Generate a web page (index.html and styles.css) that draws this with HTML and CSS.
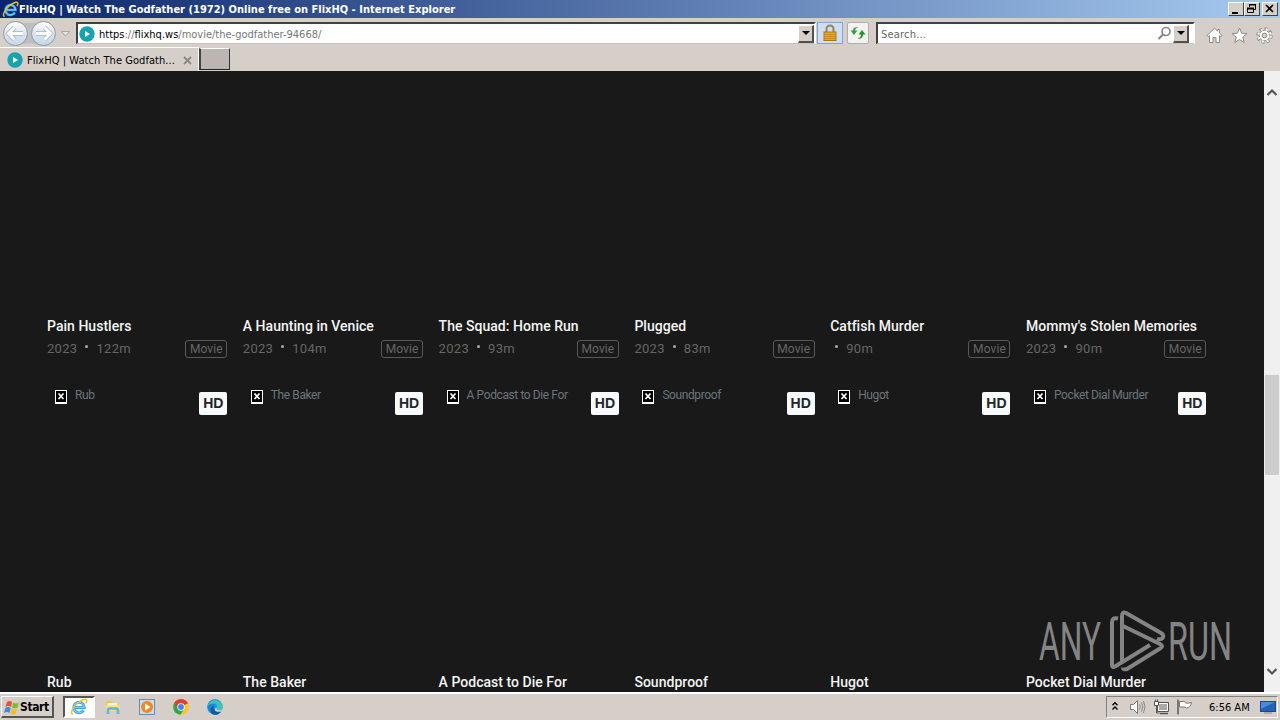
FILE: index.html
```html
<!DOCTYPE html>
<html lang="en">
<head>
    <meta charset="UTF-8">
    <meta name="viewport" content="width=device-width, initial-scale=1.0">
    <title>FlixHQ | Watch The Godfather (1972) Online free on FlixHQ</title>
    <link rel="stylesheet" href="styles.css">
</head>
<body>
    <svg width="0" height="0" class="defs">
        <defs>
            <linearGradient id="nav-fill" x1="0" y1="0" x2="0" y2="1">
                <stop offset="0" stop-color="#fff"/>
                <stop offset="0.5" stop-color="#dde3ea"/>
                <stop offset="1" stop-color="#c3d9ec"/>
            </linearGradient>
            <linearGradient id="edge-fill" x1="0" y1="0" x2="1" y2="1">
                <stop offset="0" stop-color="#1464b4"/>
                <stop offset="0.55" stop-color="#1d9be0"/>
                <stop offset="1" stop-color="#54d07a"/>
            </linearGradient>
            <symbol id="ie" viewBox="0 0 18 18">
                <path d="M13.6 12.2A5.3 5.3 0 1 1 14.3 9.5H5" fill="none" stroke="#3c9fe0" stroke-width="2.8"/>
                <path d="M13.6 12.2A5.3 5.3 0 1 1 14.3 9.5H5" fill="none" stroke="#8fd4f8" stroke-width="1"/>
                <path d="M2.8 16.4C-.5 15.500 3 9 8 5 12 1.500 16.500.2 16.800 2.600c.1 1-.4 2-1 2.900" fill="none" stroke="#f2c21c" stroke-width="1.500"/>
            </symbol>
            <symbol id="play" viewBox="0 0 16 16">
                <circle cx="8" cy="8" r="7.700" fill="#17a2b0"/>
                <path d="M6 5l5 3-5 3z" fill="#fff"/>
            </symbol>
        </defs>
    </svg>

    <div class="titlebar">
        <svg class="title-icon" width="17" height="17"><use href="#ie"/></svg>
        <span class="title-text">FlixHQ | Watch The Godfather (1972) Online free on FlixHQ - Internet Explorer</span>
        <div class="win-buttons">
            <span class="win-btn"><svg width="14" height="12"><path d="M3 9h6v2H3z"/></svg></span>
            <span class="win-btn"><svg width="14" height="12"><path d="M4.500 4V1.500h6v5H9" fill="none" stroke="#000"/><path d="M4 1h7v1.500H4z"/><path d="M2.500 5.500h6v4h-6z" fill="none" stroke="#000"/><path d="M2 4.500h7v2H2z"/></svg></span>
            <span class="win-btn close"><svg width="14" height="12"><path d="M3 2l7 7M10 2L3 9" stroke="#000" stroke-width="1.600"/></svg></span>
        </div>
    </div>

    <div class="toolbar">
        <svg class="nav" width="76" height="28" viewBox="0 0 76 28">
            <path d="M15 2Q29 6 43 2A12.500 12.500 0 0 1 43 27Q29 22 15 27z" fill="#bfbfc2"/>
            <circle cx="15.500" cy="14.500" r="12" fill="url(#nav-fill)" stroke="#8e9aa8"/>
            <circle cx="43.500" cy="14.500" r="12" fill="url(#nav-fill)" stroke="#8e9aa8"/>
            <path d="M23 14.500H9M14.500 8.500l-6 6 6 6" fill="none" stroke="#9fb4c8" stroke-width="4.500"/>
            <path d="M23 14.500H9M14.500 8.500l-6 6 6 6" fill="none" stroke="#fff" stroke-width="3"/>
            <path d="M36 14.500h14M44.500 8.500l6 6-6 6" fill="none" stroke="#9fb4c8" stroke-width="4.500"/>
            <path d="M36 14.500h14M44.500 8.500l6 6-6 6" fill="none" stroke="#fff" stroke-width="3"/>
            <path d="M61.500 12.500h8l-4 4.500z" fill="#e4e1dc" stroke="#aaa6a2"/>
        </svg>
        <div class="field address">
            <svg width="16" height="16"><use href="#play"/></svg>
            <span class="url"><b>https</b>://<b>flixhq.ws</b>/movie/the-godfather-94668/</span>
            <span class="drop"><svg width="8" height="4"><path d="M0 0h8L4 4z"/></svg></span>
        </div>
        <div class="tool lock">
            <svg width="14" height="18" viewBox="0 0 14 18">
                <path d="M3.500 9V5a3.500 3.500 0 0 1 7 0v4" fill="none" stroke="#9a8450" stroke-width="2"/>
                <rect x="1" y="8" width="12" height="8.500" fill="#e8a91e" stroke="#a8741a"/>
                <path d="M1.500 10.500h11M1.500 12.500h11M1.500 14.500h11" stroke="#c4851a" stroke-width=".8"/>
            </svg>
        </div>
        <div class="tool refresh">
            <svg width="16" height="16" viewBox="0 0 16 16">
                <path d="M8.500 2.500Q5 3 5 5.500H7.500L4 10 .5 5.500H3Q3 1.500 8.500 2.500z" fill="#3aa03c"/>
                <path d="M7.500 13.500Q11 13 11 9.500H8.500L12 5l3.500 4.500H13Q13 14.500 7.500 13.500z" fill="#279030"/>
            </svg>
        </div>
        <div class="field search">
            <span class="placeholder">Search...</span>
            <svg width="15" height="15" viewBox="0 0 15 15"><circle cx="9" cy="5.500" r="4" fill="none" stroke="#888" stroke-width="1.700"/><path d="M6 8.500l-4.500 4.500" stroke="#888" stroke-width="2.200"/></svg>
            <span class="drop"><svg width="8" height="4"><path d="M0 0h8L4 4z"/></svg></span>
        </div>
        <div class="commands">
            <svg width="17" height="17" viewBox="0 0 17 17"><path d="M8.500 1.200L1 8.500 2.200 9.700 3.500 8.700V15.500H7V10.500h3v5h3.500V8.700l1.300 1 1.200-1.200L13.500 6V2.500h-2v1.600z" fill="#fff" stroke="#8c8884"/></svg>
            <svg width="17" height="17" viewBox="0 0 17 17"><path d="M8.500 1l2.100 5.200 5.400.4-4.200 3.500 1.400 5.400-4.700-3-4.700 3 1.400-5.400L1 6.600l5.400-.4z" fill="#fff" stroke="#8c8884"/></svg>
            <svg width="17" height="17" viewBox="0 0 17 17"><circle cx="8.500" cy="8.500" r="6.600" fill="none" stroke="#8c8884" stroke-width="3.200" stroke-dasharray="3 2.184"/><circle cx="8.500" cy="8.500" r="5.300" fill="#fff" stroke="#8c8884"/><circle cx="8.500" cy="8.500" r="6.200" fill="none" stroke="#fff" stroke-width="2.200" stroke-dasharray="1.900 2.970" stroke-dashoffset="-.5"/><circle cx="8.500" cy="8.500" r="2.400" fill="#d5cfc8" stroke="#8c8884"/></svg>
        </div>
    </div>

    <div class="tabs">
        <div class="tab">
            <svg width="16" height="16"><use href="#play"/></svg>
            <span class="tab-title">FlixHQ | Watch The Godfath...</span>
            <svg width="9" height="9"><path d="M1 1l7 7M8 1L1 8" stroke="#8a8682" stroke-width="1.800"/></svg>
        </div>
        <div class="new-tab"></div>
    </div>

    <div class="viewport">
        <div class="page">
            <div class="grid">
                <div class="card">
                    <div class="poster"></div>
                    <h3>Pain Hustlers</h3>
                    <div class="meta"><span>2023</span><i></i><span>122m</span><em>Movie</em></div>
                </div>
                <div class="card">
                    <div class="poster"></div>
                    <h3>A Haunting in Venice</h3>
                    <div class="meta"><span>2023</span><i></i><span>104m</span><em>Movie</em></div>
                </div>
                <div class="card">
                    <div class="poster"></div>
                    <h3>The Squad: Home Run</h3>
                    <div class="meta"><span>2023</span><i></i><span>93m</span><em>Movie</em></div>
                </div>
                <div class="card">
                    <div class="poster"></div>
                    <h3>Plugged</h3>
                    <div class="meta"><span>2023</span><i></i><span>83m</span><em>Movie</em></div>
                </div>
                <div class="card">
                    <div class="poster"></div>
                    <h3>Catfish Murder</h3>
                    <div class="meta no-year"><i></i><span>90m</span><em>Movie</em></div>
                </div>
                <div class="card">
                    <div class="poster"></div>
                    <h3>Mommy's Stolen Memories</h3>
                    <div class="meta"><span>2023</span><i></i><span>90m</span><em>Movie</em></div>
                </div>
                <div class="card">
                    <div class="poster"><svg class="broken" width="12" height="14"><use href="#broken"/></svg><span class="alt">Rub</span><span class="hd">HD</span></div>
                    <h3>Rub</h3>
                </div>
                <div class="card">
                    <div class="poster"><svg class="broken" width="12" height="14"><use href="#broken"/></svg><span class="alt">The Baker</span><span class="hd">HD</span></div>
                    <h3>The Baker</h3>
                </div>
                <div class="card">
                    <div class="poster"><svg class="broken" width="12" height="14"><use href="#broken"/></svg><span class="alt">A Podcast to Die For</span><span class="hd">HD</span></div>
                    <h3>A Podcast to Die For</h3>
                </div>
                <div class="card">
                    <div class="poster"><svg class="broken" width="12" height="14"><use href="#broken"/></svg><span class="alt">Soundproof</span><span class="hd">HD</span></div>
                    <h3>Soundproof</h3>
                </div>
                <div class="card">
                    <div class="poster"><svg class="broken" width="12" height="14"><use href="#broken"/></svg><span class="alt">Hugot</span><span class="hd">HD</span></div>
                    <h3>Hugot</h3>
                </div>
                <div class="card">
                    <div class="poster"><svg class="broken" width="12" height="14"><use href="#broken"/></svg><span class="alt">Pocket Dial Murder</span><span class="hd">HD</span></div>
                    <h3>Pocket Dial Murder</h3>
                </div>
            </div>
        </div>
        <div class="scrollbar">
            <svg class="up" width="12" height="9"><path d="M1.500 7L6 2.500 10.500 7" fill="none" stroke="#555" stroke-width="2.200"/></svg>
            <div class="thumb"></div>
            <svg class="down" width="12" height="9"><path d="M1.500 2L6 6.500 10.500 2" fill="none" stroke="#555" stroke-width="2.200"/></svg>
        </div>
        <svg class="watermark" width="204" height="66" viewBox="0 0 204 66">
            <text x="1" y="50" textLength="62" lengthAdjust="spacingAndGlyphs">ANY</text>
            <text x="130" y="50" textLength="64" lengthAdjust="spacingAndGlyphs">RUN</text>
            <g fill="none" stroke="#848484" stroke-width="4" stroke-linejoin="round">
                <path d="M80 8.500q-6-1.500-6 4V55q0 3 3 1.500L112 35"/>
                <path d="M84 51V6q0-5 4-3l35 20q4 2.500 1 5.500-2 1.500-5 0"/>
                <path d="M85 16l37 18q4 2 0 4.500L89 59q-4 1-4-1.500"/>
            </g>
        </svg>
        <svg width="0" height="0" class="defs">
            <symbol id="broken" viewBox="0 0 12 14">
                <path d="M0 0h12v14H0z" fill="#fff"/>
                <path d="M1 1h10v11H1z"/>
                <path d="M3.500 3.500l5 5.500M8.500 3.500l-5 5.500" stroke="#fff" stroke-width="1.700"/>
            </symbol>
        </svg>
    </div>

    <div class="taskbar">
        <div class="start">
            <svg width="16" height="16" viewBox="0 0 16 16">
                <path d="M3 3q2.500-2 5 0L7 8Q4.500 6 1.500 8z" fill="#e8572a"/>
                <path d="M9 3.500q3 2 6 0L13.500 8.500q-3 2-5.500 0z" fill="#7cba3c"/>
                <path d="M1.300 9q3-2 5.500 0L5.500 14Q3 12 0 14z" fill="#3f8ed8"/>
                <path d="M7.800 9.500q3 2 5.500 0L12 14.500q-3 2-5.500 0z" fill="#f4bd28"/>
            </svg>
            <span>Start</span>
        </div>
        <div class="task active"><svg width="18" height="18"><use href="#ie"/></svg></div>
        <div class="task">
            <svg width="16" height="16" viewBox="0 0 16 16"><path d="M1 2h6l1 2h6v8H1z" fill="#e9c65c"/><path d="M2.500 4h10v5h-10z" fill="#fdf3c6"/><path d="M1 6.500h14V12H1z" fill="#f6dd86"/><path d="M3 15v-3.500q0-2 2-2h6q2 0 2 2V15" fill="none" stroke="#62b4dc" stroke-width="2.600"/></svg>
        </div>
        <div class="task">
            <svg width="16" height="16" viewBox="0 0 16 16"><rect x=".5" y=".5" width="15" height="15" fill="#c6def0" stroke="#5a90c4"/><circle cx="8" cy="8" r="6" fill="#f08a1c"/><path d="M6 4.500l5.500 3.500L6 11.500z" fill="#fff"/></svg>
        </div>
        <div class="task">
            <svg width="16" height="16" viewBox="0 0 16 16"><circle cx="8" cy="8" r="7.800" fill="#f9c823"/><path d="M8 8L1.300 4A7.800 7.800 0 0 1 14.800 4.200z" fill="#e2402f"/><path d="M8 8L1.300 4A7.800 7.800 0 0 0 7.500 15.800L11 10z" fill="#34a34e"/><path d="M4 8L1.300 4Q3 .2 8 .2t6.800 4.200H8z" fill="#e2402f"/><circle cx="8" cy="8" r="3.700" fill="#fff"/><circle cx="8" cy="8" r="2.900" fill="#4285ee"/></svg>
        </div>
        <div class="task">
            <svg width="16" height="16" viewBox="0 0 16 16"><circle cx="8" cy="8" r="7.800" fill="url(#edge-fill)"/><path d="M2 4A7.800 7.800 0 0 1 15.800 8q0 3-3 3-3.500 0-3-2Q11 5 7 4.500 4 4 .5 7z" fill="#3cc4bc"/><path d="M7 7q-2 6 7.500 5.200Q11 17 6 15.500 1 12 5 7.800z" fill="#1458a8"/><path d="M9.500 8.500q-.5 3 3.300 2.700L16 10.500v1.400q-6 2-8-.4-.8-2 1.500-3z" fill="#d6d0c8"/></svg>
        </div>
        <div class="tray">
            <svg class="expand" width="8" height="10"><path d="M1.500 4.200L4 1.700l2.500 2.500M1.500 8.500L4 6l2.500 2.500" fill="none" stroke="#000" stroke-width="1.400"/></svg>
            <svg class="speaker" width="17" height="16" viewBox="0 0 17 16"><path d="M1.500 5.500h3L8.500 1.500v13l-4-4h-3z" fill="#fff" stroke="#777"/><path d="M10.500 5.500q1.500 2.500 0 5M12.500 3.500q2.500 4.500 0 9M14.500 2q3 6 0 12" fill="none" stroke="#888"/></svg>
            <svg class="network" width="17" height="16" viewBox="0 0 17 16"><path d="M4.500 3.500h11v9h-11z" fill="#aaa" stroke="#555"/><path d="M5.500 4.500h9v7h-9z" fill="none" stroke="#fff"/><path d="M7 14.500h8" stroke="#555" stroke-width="1.500"/><path d="M3.500 5v9h3" fill="none" stroke="#555"/><path d="M1.500 2.500h4v4h-4zM2.500.5v2M4.500.5v2" fill="#fff" stroke="#555"/></svg>
            <svg class="flag" width="17" height="16" viewBox="0 0 17 16"><path d="M2 .5v15" stroke="#777" stroke-width="2"/><path d="M3.500 2.500h5l1 1.500q2 .5 6-.5-1 5-5 5.500l-1.500-1H3.500z" fill="#fff" stroke="#777"/></svg>
            <span class="clock">6:56 AM</span>
            <svg class="desktop" width="16" height="14" viewBox="0 0 16 14"><rect x=".5" y="1.500" width="15" height="10" fill="#2361b4" stroke="#174a90"/><path d="M1 2h14L1 9z" fill="#4b8cd8"/><path d="M4 13h8" stroke="#888"/></svg>
        </div>
    </div>
</body>
</html>
```

FILE: styles.css
```css
body {
    margin: 0;
    width: 1280px;
    height: 720px;
    overflow: hidden;
    display: flex;
    flex-direction: column;
    background-color: #d6cfc9;
    font-family: "DejaVu Sans Condensed", "DejaVu Sans", sans-serif;
    font-size: 11px;
    color: #000;
}

svg {
    display: block;
    flex: none;
}

.defs {
    position: absolute;
}

.titlebar {
    height: 18px;
    flex: none;
    display: flex;
    align-items: center;
    box-sizing: border-box;
    padding: 0 2px;
    background-image: linear-gradient(to right, #0a246a, #a6caf0);
    color: #fff;
}

.title-text {
    font-weight: bold;
    letter-spacing: 0.01px;
    white-space: nowrap;
}

.win-buttons {
    margin-left: auto;
    display: flex;
}

.win-btn {
    box-sizing: border-box;
    width: 16px;
    height: 14px;
    background-color: #d4d0c8;
    border: 1px solid #404040;
    border-top-color: #fff;
    border-left-color: #fff;
}

.close {
    margin-left: 2px;
}

.toolbar {
    height: 29px;
    flex: none;
    display: flex;
    border-top: 1px solid #d4d0c8;
    box-sizing: border-box;
}

.field {
    box-sizing: border-box;
    height: 22px;
    margin-top: 3px;
    display: flex;
    align-items: center;
    background-color: #fff;
    border: 2px solid #454040;
    border-right-color: #fff;
    border-bottom: 1px solid #c8c0bc;
}

.address {
    width: 740px;
    padding-left: 1px;
}

.url {
    margin-left: 4px;
    padding-top: 1px;
    color: #777;
    white-space: nowrap;
}

.url b {
    font-weight: normal;
    color: #000;
}

.drop {
    box-sizing: border-box;
    width: 16px;
    height: 18px;
    margin-left: auto;
    display: flex;
    align-items: center;
    justify-content: center;
    background-color: #d6cfc9;
    border: 1px solid #fff;
    border-right: 2px solid #55504c;
    border-bottom: 2px solid #55504c;
}

.tool {
    box-sizing: border-box;
    height: 22px;
    margin-top: 3px;
    display: flex;
    align-items: center;
    justify-content: center;
}

.lock {
    width: 26px;
    margin-left: 1px;
    background-color: #cbe0f7;
    border: 1px solid #7ea6d4;
}

.refresh {
    width: 22px;
    margin-left: 4px;
    background-color: #f2f2f0;
    border: 1px solid #b4aeaa;
    border-radius: 2px;
}

.search {
    width: 319px;
    margin-left: 7px;
    padding-right: 4px;
}

.placeholder {
    margin-left: 3px;
    margin-right: auto;
    padding-top: 1px;
    color: #666;
    letter-spacing: 0.2px;
}

.search .drop {
    margin-left: 1px;
}

.commands {
    display: flex;
    gap: 8px;
    margin: 8px 0 0 11px;
}

.tabs {
    height: 24px;
    flex: none;
    display: flex;
}

.tab {
    box-sizing: border-box;
    width: 199px;
    display: flex;
    align-items: center;
    padding-left: 7px;
    padding-top: 1px;
    border-top: 1px solid #fff;
    border-right: 1px solid #fff;
}

.tab-title {
    margin-left: 4px;
    width: 156px;
    white-space: nowrap;
    letter-spacing: 0.05px;
}

.new-tab {
    box-sizing: border-box;
    width: 31px;
    height: 22px;
    margin-top: 1px;
    background-color: #bdb5b1;
    border: 1px solid #fff;
    border-left: 2px solid #444;
    border-right: 1px solid #333;
    border-bottom: 1px solid #222;
}

.viewport {
    position: relative;
    height: 621px;
    flex: none;
    display: flex;
}

.page {
    width: 1264px;
    overflow: hidden;
    background-color: #191919;
    font-family: Roboto, sans-serif;
}

.grid {
    display: grid;
    grid-template-columns: repeat(6, 180.3px);
    grid-auto-rows: 356px;
    column-gap: 15.5px;
    margin: -42px 0 0 47px;
}

.poster {
    height: 287px;
    display: flex;
    align-items: flex-start;
}

.card h3 {
    margin: 0;
    font-size: 14px;
    line-height: 20px;
    font-weight: 500;
    letter-spacing: 0.03px;
    color: #f4f4f4;
    white-space: nowrap;
}

.meta {
    display: flex;
    align-items: center;
    height: 19px;
    margin-top: 3px;
    font-size: 13px;
    letter-spacing: 0.3px;
    color: #666;
}

.meta i {
    width: 3px;
    height: 3px;
    margin: -5px 8px 0;
    border-radius: 50%;
    background-color: #aaa;
}

.meta.no-year i {
    margin-left: 5px;
}

.meta em {
    box-sizing: border-box;
    width: 42px;
    height: 18px;
    margin-left: auto;
    border: 1px solid #595959;
    border-radius: 3px;
    font-size: 12px;
    font-style: normal;
    letter-spacing: 0.1px;
    line-height: 17px;
    text-align: center;
}

.broken {
    margin: 5px 0 0 8px;
}

.alt {
    margin: 2px 0 0 8px;
    font-size: 12px;
    letter-spacing: -0.4px;
    line-height: 16px;
    color: #6c757d;
    white-space: nowrap;
}

.hd {
    width: 28px;
    height: 23px;
    margin: 7px 0 0 auto;
    border-radius: 2px;
    background-color: #f8f9fa;
    color: #212529;
    font-family: "Liberation Sans", Arial, sans-serif;
    font-size: 14px;
    font-weight: 700;
    line-height: 23px;
    text-align: center;
}

.scrollbar {
    width: 16px;
    background-color: #f0f0f0;
    display: flex;
    flex-direction: column;
    align-items: center;
}

.up {
    margin-top: 17px;
}

.thumb {
    width: 14px;
    height: 100px;
    margin-top: 278px;
    background-color: #cdcdcd;
}

.down {
    margin-top: auto;
    margin-bottom: 16px;
}

.watermark {
    position: absolute;
    left: 1038px;
    top: 539px;
    font-family: Roboto, sans-serif;
    font-size: 53px;
    line-height: 1;
    fill: #848484;
}

.taskbar {
    box-sizing: border-box;
    height: 28px;
    flex: none;
    display: flex;
    align-items: center;
    padding-top: 1px;
    border-top: 1px solid #fff;
    box-shadow: inset 0 1px #fff;
}

.start {
    box-sizing: border-box;
    width: 53px;
    height: 22px;
    margin-left: 1px;
    padding-left: 2px;
    display: flex;
    align-items: center;
    border: 1px solid #fff;
    border-right: 2px solid #555;
    border-bottom: 2px solid #555;
    font-size: 12px;
    font-weight: bold;
    letter-spacing: -0.4px;
}

.task {
    width: 34px;
    height: 22px;
    display: flex;
    align-items: center;
    justify-content: center;
}

.task.active {
    box-sizing: border-box;
    width: 32px;
    margin: 0 1px 0 9px;
    background-color: #fff;
    border: 2px solid #555;
    border-right-color: #fff;
    border-bottom-color: #fff;
}

.tray {
    box-sizing: border-box;
    width: 172px;
    height: 22px;
    margin-left: auto;
    margin-right: 2px;
    display: flex;
    align-items: center;
    padding-left: 4px;
    border: 1px solid #808080;
    border-right-color: #fff;
    border-bottom-color: #fff;
}

.expand {
    margin-top: -3px;
}

.speaker {
    margin-left: 10px;
}

.network,
.flag {
    margin-left: 7px;
}

.flag {
    margin-left: 6px;
}

.clock {
    width: 51px;
    margin-left: 16px;
    white-space: nowrap;
}
```
